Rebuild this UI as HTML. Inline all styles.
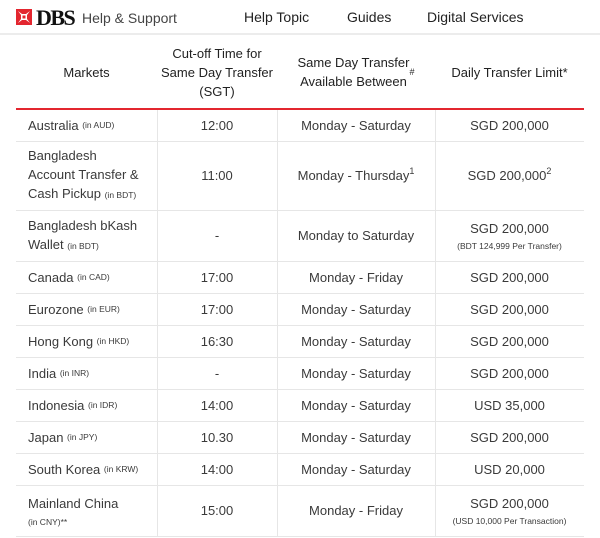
<!DOCTYPE html>
<html><head><meta charset="utf-8"><style>
*{margin:0;padding:0;box-sizing:border-box}
body{width:600px;height:538px;overflow:hidden;background:#fff;font-family:"Liberation Sans",sans-serif;color:#3a3a3a;position:relative}
.hdr{position:absolute;left:0;top:0;width:600px;height:35px;border-bottom:2px solid #ececec}
.logo{position:absolute;left:16px;top:9px;width:16px;height:16px;background:#e3262f}
.dbs{position:absolute;left:36px;top:5px;font-family:"Liberation Serif",serif;font-weight:bold;font-size:22px;color:#111;letter-spacing:-1.5px}
.hs{position:absolute;left:82px;top:10px;font-size:14px;color:#444}
.nav{position:absolute;top:9px;font-size:14px;color:#222}
.cell{position:absolute;display:flex;align-items:center;justify-content:center;text-align:center;font-size:13px;line-height:19px}
.l{justify-content:flex-start;text-align:left;padding-left:12px}
.th{font-size:13px;line-height:19px;color:#222}
.hl{position:absolute;left:16px;width:568px;height:1px;background:#e6e6e6}
.vl{position:absolute;width:1px;background:#e6e6e6;top:110px;height:426px}
small{font-size:8.5px}
.sm{font-size:8.5px;line-height:12px;display:block}
sup{font-size:9px;line-height:0;vertical-align:6px}
</style></head><body>
<div class="hdr">
<div class="logo"><svg width="16" height="16" viewBox="0 0 16 16"><path d="M2 2L6 5L10 5L14 2L11 6L11 10L14 14L10 11L6 11L2 14L5 10L5 6Z" fill="#fff"/><rect x="6.5" y="6.5" width="3" height="3" fill="#e3262f"/></svg></div>
<div class="dbs">DBS</div>
<div class="hs">Help &amp; Support</div>
<div class="nav" style="left:244px">Help Topic</div>
<div class="nav" style="left:347px">Guides</div>
<div class="nav" style="left:427px">Digital Services</div>
</div>
<div class="cell th" style="left:16px;top:36px;width:141px;height:72px">Markets</div>
<div class="cell th" style="left:157px;top:36px;width:120px;height:72px">Cut-off Time for<br>Same Day Transfer<br>(SGT)</div>
<div class="cell th" style="left:277px;top:36px;width:158px;height:72px">Same Day Transfer<br>Available Between<sup>#</sup></div>
<div class="cell th" style="left:435px;top:36px;width:149px;height:72px">Daily Transfer Limit*</div>
<div style="position:absolute;left:16px;top:108px;width:568px;height:2px;background:#e3262f"></div>
<div class="vl" style="left:157px"></div><div class="vl" style="left:277px"></div><div class="vl" style="left:435px"></div>
<div class="hl" style="top:141px"></div><div class="hl" style="top:210px"></div><div class="hl" style="top:261px"></div><div class="hl" style="top:293px"></div><div class="hl" style="top:325px"></div><div class="hl" style="top:357px"></div><div class="hl" style="top:389px"></div><div class="hl" style="top:421px"></div><div class="hl" style="top:453px"></div><div class="hl" style="top:485px"></div><div class="hl" style="top:536px"></div>

<div class="cell l" style="left:16px;top:110px;width:141px;height:31px">Australia&nbsp;<small>(in AUD)</small></div>
<div class="cell" style="left:157px;top:110px;width:120px;height:31px">12:00</div>
<div class="cell" style="left:277px;top:110px;width:158px;height:31px">Monday - Saturday</div>
<div class="cell" style="left:435px;top:110px;width:149px;height:31px">SGD 200,000</div>

<div class="cell l" style="left:16px;top:141px;width:141px;height:69px"><div>Bangladesh<br>Account Transfer &amp;<br>Cash Pickup <small>(in BDT)</small></div></div>
<div class="cell" style="left:157px;top:141px;width:120px;height:69px">11:00</div>
<div class="cell" style="left:277px;top:141px;width:158px;height:69px"><div>Monday - Thursday<sup>1</sup></div></div>
<div class="cell" style="left:435px;top:141px;width:149px;height:69px"><div>SGD 200,000<sup>2</sup></div></div>

<div class="cell l" style="left:16px;top:210px;width:141px;height:51px"><div>Bangladesh bKash<br>Wallet <small>(in BDT)</small></div></div>
<div class="cell" style="left:157px;top:210px;width:120px;height:51px">-</div>
<div class="cell" style="left:277px;top:210px;width:158px;height:51px">Monday to Saturday</div>
<div class="cell" style="left:435px;top:210px;width:149px;height:51px"><div>SGD 200,000<span class="sm" style="margin-top:2px">(BDT 124,999 Per Transfer)</span></div></div>

<div class="cell l" style="left:16px;top:261px;width:141px;height:32px">Canada&nbsp;<small>(in CAD)</small></div>
<div class="cell" style="left:157px;top:261px;width:120px;height:32px">17:00</div>
<div class="cell" style="left:277px;top:261px;width:158px;height:32px">Monday - Friday</div>
<div class="cell" style="left:435px;top:261px;width:149px;height:32px">SGD 200,000</div>

<div class="cell l" style="left:16px;top:293px;width:141px;height:32px">Eurozone&nbsp;<small>(in EUR)</small></div>
<div class="cell" style="left:157px;top:293px;width:120px;height:32px">17:00</div>
<div class="cell" style="left:277px;top:293px;width:158px;height:32px">Monday - Saturday</div>
<div class="cell" style="left:435px;top:293px;width:149px;height:32px">SGD 200,000</div>

<div class="cell l" style="left:16px;top:325px;width:141px;height:32px">Hong Kong&nbsp;<small>(in HKD)</small></div>
<div class="cell" style="left:157px;top:325px;width:120px;height:32px">16:30</div>
<div class="cell" style="left:277px;top:325px;width:158px;height:32px">Monday - Saturday</div>
<div class="cell" style="left:435px;top:325px;width:149px;height:32px">SGD 200,000</div>

<div class="cell l" style="left:16px;top:357px;width:141px;height:32px">India&nbsp;<small>(in INR)</small></div>
<div class="cell" style="left:157px;top:357px;width:120px;height:32px">-</div>
<div class="cell" style="left:277px;top:357px;width:158px;height:32px">Monday - Saturday</div>
<div class="cell" style="left:435px;top:357px;width:149px;height:32px">SGD 200,000</div>

<div class="cell l" style="left:16px;top:389px;width:141px;height:32px">Indonesia&nbsp;<small>(in IDR)</small></div>
<div class="cell" style="left:157px;top:389px;width:120px;height:32px">14:00</div>
<div class="cell" style="left:277px;top:389px;width:158px;height:32px">Monday - Saturday</div>
<div class="cell" style="left:435px;top:389px;width:149px;height:32px">USD 35,000</div>

<div class="cell l" style="left:16px;top:421px;width:141px;height:32px">Japan&nbsp;<small>(in JPY)</small></div>
<div class="cell" style="left:157px;top:421px;width:120px;height:32px">10.30</div>
<div class="cell" style="left:277px;top:421px;width:158px;height:32px">Monday - Saturday</div>
<div class="cell" style="left:435px;top:421px;width:149px;height:32px">SGD 200,000</div>

<div class="cell l" style="left:16px;top:453px;width:141px;height:32px">South Korea&nbsp;<small>(in KRW)</small></div>
<div class="cell" style="left:157px;top:453px;width:120px;height:32px">14:00</div>
<div class="cell" style="left:277px;top:453px;width:158px;height:32px">Monday - Saturday</div>
<div class="cell" style="left:435px;top:453px;width:149px;height:32px">USD 20,000</div>

<div class="cell l" style="left:16px;top:485px;width:141px;height:51px"><div>Mainland China<span class="sm" style="margin-top:3px">(in CNY)**</span></div></div>
<div class="cell" style="left:157px;top:485px;width:120px;height:51px">15:00</div>
<div class="cell" style="left:277px;top:485px;width:158px;height:51px">Monday - Friday</div>
<div class="cell" style="left:435px;top:485px;width:149px;height:51px"><div>SGD 200,000<span class="sm" style="margin-top:2px">(USD 10,000 Per Transaction)</span></div></div>
</body></html>
